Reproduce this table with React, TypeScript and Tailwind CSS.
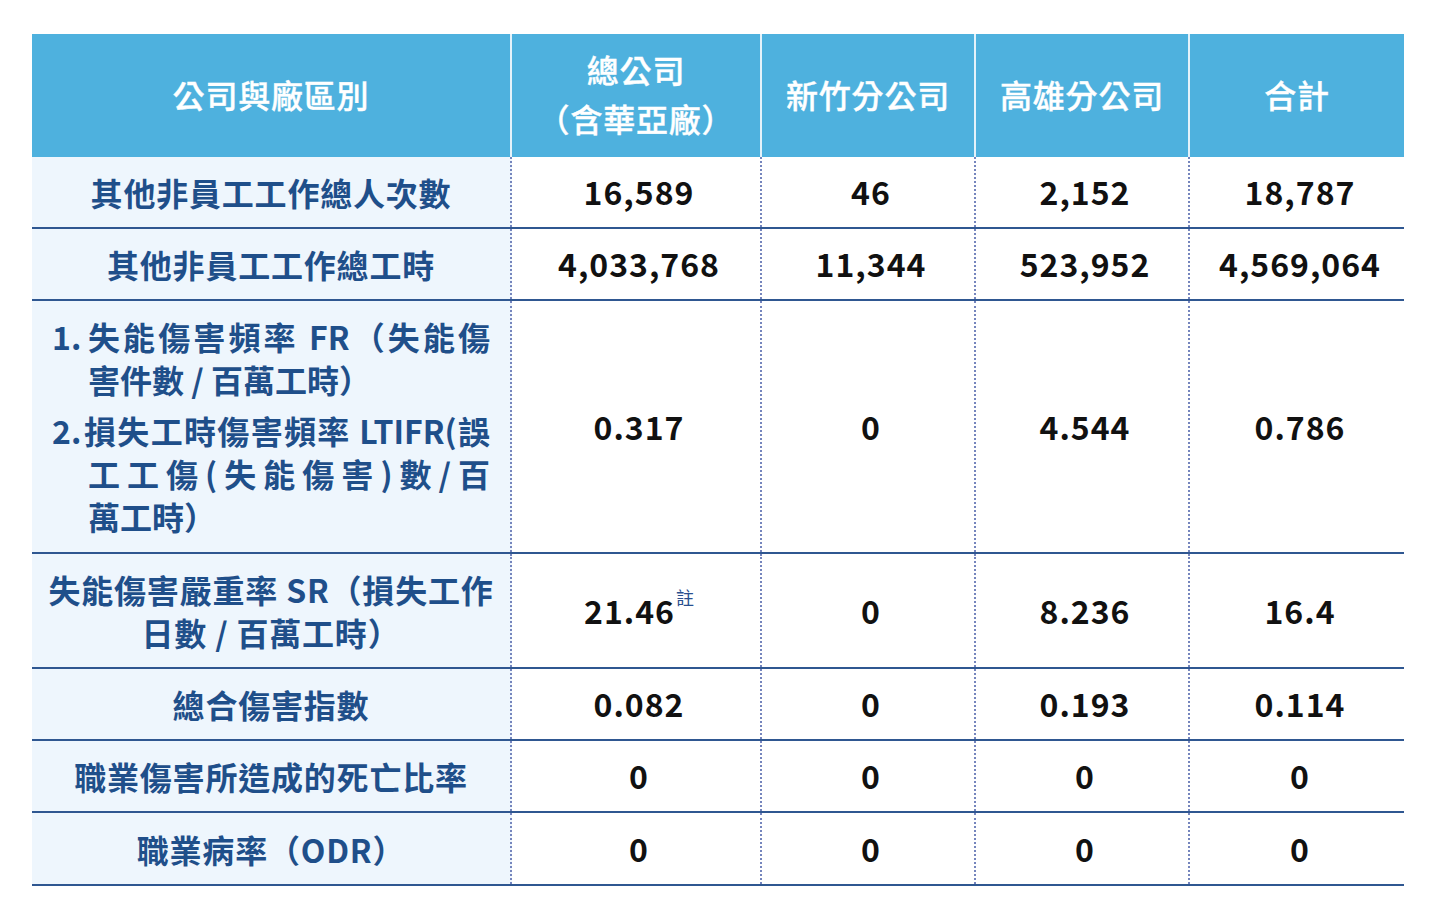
import React from "react";

const font = { fontFamily: '"Noto Sans CJK TC", "Noto Sans", sans-serif' };

type Row = { label: React.ReactNode; values: React.ReactNode[]; h: string };

const Num = ({ children }: { children: React.ReactNode }) => (
  <span className="text-[32px] font-bold tracking-[1px] text-[#111]">{children}</span>
);

const rows: Row[] = [
  { label: "其他非員工工作總人次數", values: ["16,589", "46", "2,152", "18,787"], h: "h-[72px]" },
  { label: "其他非員工工作總工時", values: ["4,033,768", "11,344", "523,952", "4,569,064"], h: "h-[72px]" },
  {
    label: (
      <div className="flex w-full flex-col gap-[8px] pl-[20px] pr-[20px] text-left leading-[43px] tracking-normal">
        <div className="flex">
          <span className="w-[36px] shrink-0">1.</span>
          <div className="min-w-0 flex-1">
            <div className="[text-align-last:justify]">失能傷害頻率 FR（失能傷</div>
            <div>害件數 / 百萬工時）</div>
          </div>
        </div>
        <div className="flex">
          <span className="w-[32px] shrink-0">2.</span>
          <div className="min-w-0 flex-1">
            <div className="whitespace-nowrap [text-align-last:justify]">損失工時傷害頻率 LTIFR(誤</div>
            <div className="pl-[4px] [text-align-last:justify]">工工傷(失能傷害)數/百</div>
            <div className="pl-[4px]">萬工時）</div>
          </div>
        </div>
      </div>
    ),
    values: ["0.317", "0", "4.544", "0.786"],
    h: "h-[253px]",
  },
  {
    label: (
      <div className="leading-[43px]">
        失能傷害嚴重率 SR（損失工作
        <br />
        日數 / 百萬工時）
      </div>
    ),
    values: [
      <>
        21.46
        <span className="ml-[1px] inline-block align-top pt-[2px] text-[18px] font-normal leading-none tracking-normal text-[#2a4f8f]">
          註
        </span>
      </>,
      "0",
      "8.236",
      "16.4",
    ],
    h: "h-[115px]",
  },
  { label: "總合傷害指數", values: ["0.082", "0", "0.193", "0.114"], h: "h-[72px]" },
  { label: "職業傷害所造成的死亡比率", values: ["0", "0", "0", "0"], h: "h-[72px]" },
  { label: "職業病率（ODR）", values: ["0", "0", "0", "0"], h: "h-[73px]" },
];

const cols = "grid grid-cols-[480px_250px_214px_214px_214px]";

export default function App() {
  return (
    <div className="min-h-screen bg-white pl-[32px] pt-[34px]" style={font}>
      <div className="w-[1372px]">
        <div
          className={`${cols} h-[123px] bg-[#4eb1de] text-[32px] font-medium tracking-[0.8px] text-white [-webkit-text-stroke:0.4px_#fff]`}
        >
          <div className="flex items-center justify-center border-r-2 border-[#e4f2fa] pb-[3px]">公司與廠區別</div>
          <div className="flex flex-col items-center justify-center border-r-2 border-[#e4f2fa] pb-[3px] leading-[49px]">
            <span>總公司</span>
            <span>（含華亞廠）</span>
          </div>
          <div className="flex items-center justify-center border-r-2 border-[#e4f2fa] pb-[3px]">新竹分公司</div>
          <div className="flex items-center justify-center border-r-2 border-[#e4f2fa] pb-[3px]">高雄分公司</div>
          <div className="flex items-center justify-center pb-[3px]">合計</div>
        </div>
        {rows.map((r, i) => (
          <div key={i} className={`${cols} ${r.h} border-b-2 border-[#2f5791]`}>
            <div className="flex items-center justify-center border-r-2 border-dotted border-[#7585bd] bg-[#eef6fd] text-center text-[32px] font-bold tracking-[0.8px] text-[#1f4f8a]">
              {r.label}
            </div>
            {r.values.map((v, j) => (
              <div
                key={j}
                className={`flex items-center justify-center pb-[2px] pl-[6px] ${j < 3 ? "border-r-2 border-dotted border-[#7585bd]" : ""}`}
              >
                <Num>{v}</Num>
              </div>
            ))}
          </div>
        ))}
      </div>
    </div>
  );
}
